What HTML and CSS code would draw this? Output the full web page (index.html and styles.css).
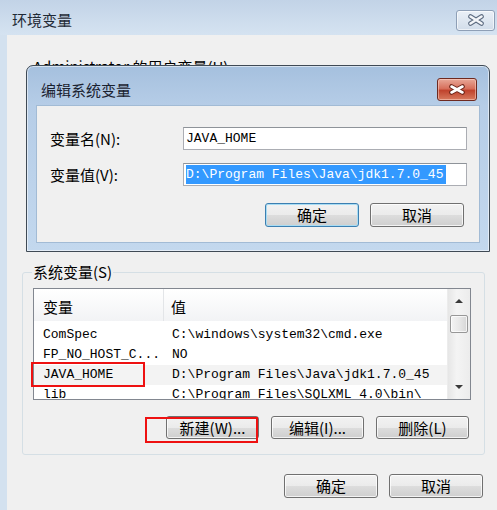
FILE: index.html
```html
<!DOCTYPE html>
<html lang="zh-CN">
<head>
    <meta charset="UTF-8">
    <title>环境变量</title>
    <link rel="stylesheet" href="styles.css">
</head>
<body>
    <div class="window">
        <div class="titlebar">
            <span class="title">环境变量</span>
            <button class="close-btn">
                <svg width="18" height="12" viewBox="0 0 18 12">
                    <path d="M3.5 2.5 L14.5 9.5 M14.5 2.5 L3.5 9.5" stroke="#5c6b80" stroke-width="4.6" stroke-linecap="round"/>
                    <path d="M3.5 2.5 L14.5 9.5 M14.5 2.5 L3.5 9.5" stroke="#f4f6f9" stroke-width="2.6" stroke-linecap="round"/>
                </svg>
            </button>
        </div>

        <div class="client">
            <div class="user-label">Administrator 的用户变量(U)</div>
            <div class="user-group"></div>

            <fieldset class="group">
                <legend>系统变量(S)</legend>
                <div class="listview">
                    <div class="list-main">
                        <div class="list-header">
                            <span class="col-name">变量</span>
                            <span class="col-value">值</span>
                        </div>
                        <div class="list-rows">
                            <div class="row">
                                <span class="col-name">ComSpec</span>
                                <span class="col-value">C:\windows\system32\cmd.exe</span>
                            </div>
                            <div class="row">
                                <span class="col-name">FP_NO_HOST_C...</span>
                                <span class="col-value">NO</span>
                            </div>
                            <div class="row hover">
                                <span class="col-name">JAVA_HOME</span>
                                <span class="col-value">D:\Program Files\Java\jdk1.7.0_45</span>
                            </div>
                            <div class="row">
                                <span class="col-name">lib</span>
                                <span class="col-value">C:\Program Files\SQLXML 4.0\bin\</span>
                            </div>
                        </div>
                    </div>
                    <div class="scrollbar">
                        <div class="sb-arrow"><span class="tri-up"></span></div>
                        <div class="sb-thumb"></div>
                        <div class="sb-track"></div>
                        <div class="sb-arrow"><span class="tri-down"></span></div>
                    </div>
                </div>
                <div class="group-buttons">
                    <button class="btn">新建(W)...</button>
                    <button class="btn">编辑(I)...</button>
                    <button class="btn">删除(L)</button>
                </div>
            </fieldset>

            <div class="actions">
                <button class="btn btn-wide">确定</button>
                <button class="btn btn-wide">取消</button>
            </div>
        </div>

        <!-- 编辑对话框，叠在主窗口上 -->
        <div class="dialog">
            <div class="dialog-titlebar">
                <span class="dialog-title">编辑系统变量</span>
                <button class="dialog-close">
                    <svg width="18" height="11" viewBox="0 0 18 11">
                        <path d="M3.5 2.5 L14.5 8.5 M14.5 2.5 L3.5 8.5" stroke="#6b2418" stroke-width="4.6" stroke-linecap="round"/>
                        <path d="M3.5 2.5 L14.5 8.5 M14.5 2.5 L3.5 8.5" stroke="#ffffff" stroke-width="2.6" stroke-linecap="round"/>
                    </svg>
                </button>
            </div>
            <div class="dialog-client">
                <div class="form-grid">
                    <label class="form-label">变量名(N):</label>
                    <div class="field">JAVA_HOME</div>
                    <label class="form-label">变量值(V):</label>
                    <div class="field"><span class="selected">D:\Program Files\Java\jdk1.7.0_45</span></div>
                </div>
                <div class="dialog-buttons">
                    <button class="btn btn-wide btn-default">确定</button>
                    <button class="btn btn-wide">取消</button>
                </div>
            </div>
        </div>

        <div class="mark mark-row"></div>
        <div class="mark mark-new"></div>
    </div>
</body>
</html>
```

FILE: styles.css
```css
* {
    box-sizing: border-box;
}
body {
    margin: 0;
    width: 497px;
    height: 510px;
    overflow: hidden;
    font-family: "Noto Sans CJK SC", sans-serif;
    font-size: 15px;
    color: #000;
    background: #f0f0f0;
}
.window {
    position: relative;
    width: 497px;
    height: 510px;
}
.titlebar {
    height: 35px;
    padding: 5px 2px 0 12px;
    display: flex;
    align-items: center;
    justify-content: space-between;
    background: linear-gradient(to bottom, #c2d3e7, #d5e3f1);
}
.title {
    color: #1f2a36;
    line-height: 18px;
}
.close-btn {
    width: 39px;
    height: 21px;
    padding: 0;
    border: 1px solid #8e9fb6;
    border-radius: 3px;
    background: linear-gradient(to bottom, #eaf0f7, #d2ddea);
    display: flex;
    align-items: center;
    justify-content: center;
    box-shadow: inset 0 0 0 1px rgba(255, 255, 255, 0.6);
}
.client {
    height: 475px;
    border-left: 7px solid #d3e1ef;
    background: #f0f0f0;
    padding-top: 23px;
}
.user-label {
    padding-left: 26px;
    line-height: 18px;
    height: 18px;
}
.user-group {
    height: 187px;
}

/* 系统变量分组 */
.group {
    margin: 0 12px 0 15px;
    padding: 7px 13px 15px 10px;
    border: 1px solid #d5dfe5;
    border-radius: 3px;
    min-width: 0;
}
.group legend {
    padding: 0 1px;
    margin-left: -1px;
    line-height: 18px;
}
.listview {
    height: 112px;
    border: 1px solid #828790;
    background: #fff;
    display: flex;
}
.list-main {
    flex-grow: 1;
    overflow: hidden;
}
.list-header {
    height: 32px;
    padding-top: 4px;
    display: flex;
    background: linear-gradient(to bottom, #ffffff, #f2f3f5);
    line-height: 28px;
}
.list-header .col-name {
    border-right: 1px solid #e3e5e8;
    margin-top: -4px;
    padding-top: 4px;
}
.col-name {
    width: 130px;
    flex-shrink: 0;
    padding-left: 9px;
    white-space: nowrap;
}
.col-value {
    padding-left: 7px;
    white-space: nowrap;
}
.list-rows {
    padding-top: 4px;
}
.row {
    display: flex;
    height: 20px;
    line-height: 20px;
    font-family: "Liberation Mono", monospace;
    font-size: 13px;
}
.row .col-value {
    padding-left: 8px;
}
.row.hover {
    background: #f3f3f3;
}
.scrollbar {
    width: 23px;
    flex-shrink: 0;
    display: flex;
    flex-direction: column;
    align-items: center;
    background: linear-gradient(to right, #e6e6e6, #f4f4f4 40%, #ececec);
    border-left: 1px solid #ececec;
}
.sb-arrow {
    height: 24px;
    width: 100%;
    display: flex;
    align-items: center;
    justify-content: center;
}
.tri-up {
    border-left: 4px solid transparent;
    border-right: 4px solid transparent;
    border-bottom: 4px solid #3a3a3a;
}
.tri-down {
    border-left: 4px solid transparent;
    border-right: 4px solid transparent;
    border-top: 4px solid #3a3a3a;
}
.sb-thumb {
    margin-top: 2px;
    width: 18px;
    height: 18px;
    border: 1px solid #979797;
    border-radius: 2px;
    background: linear-gradient(to right, #f4f4f4, #e8e8e8 50%, #d6d6d6);
    box-shadow: inset 0 0 0 1px rgba(255, 255, 255, 0.7);
}
.sb-track {
    flex-grow: 1;
}
.group-buttons {
    margin-top: 16px;
    padding-right: 2px;
    display: flex;
    justify-content: flex-end;
    gap: 12px;
}

/* 按钮 */
.btn {
    width: 93px;
    height: 23px;
    padding: 0;
    border: 1px solid #707070;
    border-radius: 3px;
    background: linear-gradient(to bottom, #f2f2f2 0%, #ebebeb 50%, #dddddd 50%, #cfcfcf 100%);
    box-shadow: inset 0 0 0 1px rgba(255, 255, 255, 0.75);
    font-family: inherit;
    font-size: 15px;
    line-height: 20px;
    color: #000;
}
.btn-wide {
    width: 94px;
    height: 24px;
}
.btn-default {
    border-color: #3c7fb1;
    box-shadow: inset 0 0 0 1px #a8dcf3;
}
.actions {
    margin-top: 19px;
    padding-right: 14px;
    display: flex;
    justify-content: flex-end;
    gap: 11px;
}

/* 编辑系统变量对话框 */
.dialog {
    position: absolute;
    left: 26px;
    top: 65px;
    width: 464px;
    height: 187px;
    border: 1px solid #3f4a55;
    border-radius: 7px 7px 0 0;
    background: linear-gradient(to bottom, #a5c0de 0, #b6cde7 40px, #c3d8ee 100%);
    box-shadow: inset 0 0 0 1px rgba(255, 255, 255, 0.55);
}
.dialog-titlebar {
    height: 39px;
    padding: 8px 12px 0 14px;
    display: flex;
    align-items: center;
    justify-content: space-between;
}
.dialog-title {
    color: #1a2230;
    line-height: 18px;
}
.dialog-close {
    width: 40px;
    height: 23px;
    padding: 0;
    border: 1px solid #6e2a20;
    border-radius: 3px;
    background: linear-gradient(to bottom, #e8a898 0%, #d7705c 45%, #c0432d 55%, #d77a5e 100%);
    display: flex;
    align-items: center;
    justify-content: center;
    box-shadow: inset 0 0 0 1px rgba(255, 220, 210, 0.5);
}
.dialog-client {
    margin: 0 9px;
    height: 138px;
    border: 1px solid #a2bbd5;
    background: #f0f0f0;
    padding: 21px 12px 0 13px;
}
.form-grid {
    display: grid;
    grid-template-columns: 133px 1fr;
    row-gap: 13px;
    align-items: center;
}
.form-label {
    line-height: 18px;
}
.field {
    height: 23px;
    border: 1px solid #abadb3;
    border-top-color: #8e9399;
    background: #fff;
    padding-left: 2px;
    display: flex;
    align-items: center;
    font-family: "Liberation Mono", monospace;
    font-size: 13px;
    white-space: nowrap;
}
.selected {
    height: 19px;
    line-height: 19px;
    background: #3399ff;
    color: #fff;
    padding-right: 3px;
}
.dialog-buttons {
    margin-top: 17px;
    padding-right: 3px;
    display: flex;
    justify-content: flex-end;
    gap: 11px;
}

/* 截图上的红色标注框 */
.mark {
    position: absolute;
    border: 2px solid #ee1111;
}
.mark-row {
    left: 31px;
    top: 362px;
    width: 114px;
    height: 25px;
}
.mark-new {
    left: 145px;
    top: 417px;
    width: 113px;
    height: 26px;
}
```
